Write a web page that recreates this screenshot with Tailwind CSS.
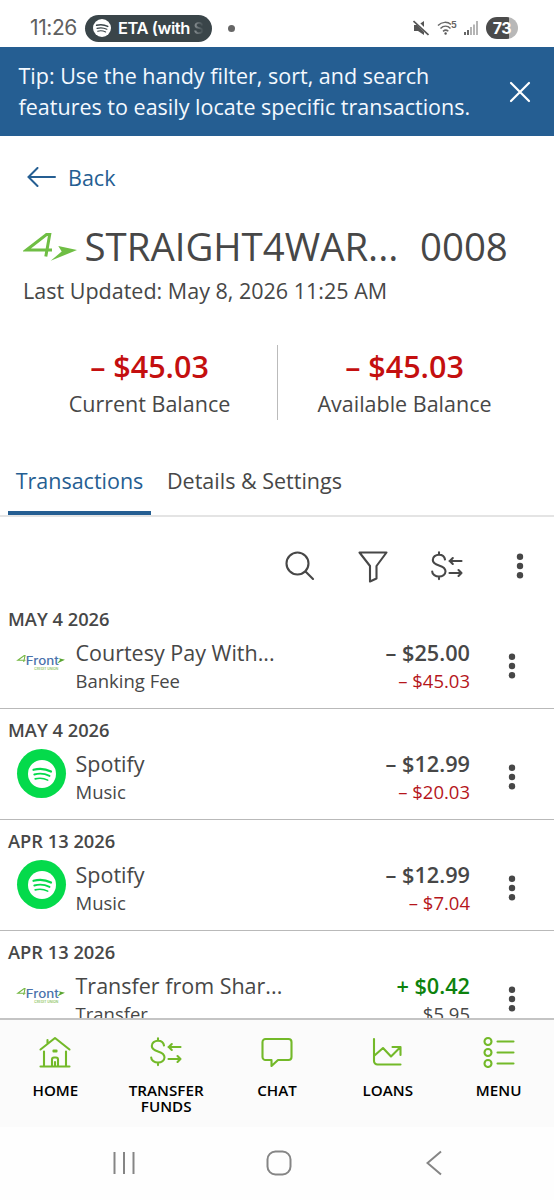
<!DOCTYPE html>
<html lang="en">
<head>
<meta charset="utf-8">
<title>Account transactions</title>
<script src="https://cdn.jsdelivr.net/npm/@tailwindcss/browser@4"></script>
</head>
<body class="w-[554px] h-[1200px] overflow-hidden bg-white text-[#474747] font-['Open_Sans',sans-serif]">
<svg class="hidden">
  <defs>
    <symbol id="transfer" viewBox="0 0 32 30">
      <g fill="none" stroke="currentColor" stroke-width="2.100" stroke-linecap="round" stroke-linejoin="round">
        <path d="M14 8.500C13.500 5.200 11.300 3.800 8 3.800S1.800 5.700 1.800 8.900c0 3.400 2.800 4.500 6.200 5.500s6.500 2.200 6.500 5.900c0 3.400-3 5.200-6.500 5.200S1.200 23.500 1.200 20.500M8 1.200v2.600M8 25.500v2.600"/>
        <path d="M18.500 10H30.500M21.800 7l-3 3 3 3M18.500 22H30.500M27.500 19l3 3-3 3"/>
      </g>
    </symbol>
    <symbol id="dots" viewBox="0 0 8 26">
      <g fill="currentColor"><circle cx="4" cy="3.700" r="3.200"/><circle cx="4" cy="13" r="3.200"/><circle cx="4" cy="22.300" r="3.200"/></g>
    </symbol>
    <symbol id="waves" viewBox="0 0 28 28">
      <g fill="none" stroke="currentColor" stroke-linecap="round"><path stroke-width="2.200" d="M5.500 9.800c6-1.600 12.200-1 17.500 1.700"/><path stroke-width="1.900" d="M6.300 14.500c5-1.400 10.500-.9 15.200 1.400"/><path stroke-width="1.600" d="M7.200 18.900c4.300-1.100 8.600-.7 12.500 1.200"/></g>
    </symbol>
    <symbol id="four" viewBox="0 0 54 30">
      <path fill="none" stroke="#6fbe44" stroke-width="3" d="M29 18H3.500L23.500 2.500h3.200L22.800 24.500"/>
      <path fill="#6fbe44" d="M35.300 14L54 18 27.700 28.800l11-9.300z"/>
    </symbol>
    <symbol id="front" viewBox="0 0 50 18">
      <path fill="none" stroke="#76b843" stroke-width="1.100" d="M9.500 7.300H1.800L8.200 2.600h.8L7.700 9"/>
      <text x="9.800" y="12.300" font-family="Inter" font-size="11.500" font-weight="500" fill="#4a72ac" textLength="33" lengthAdjust="spacingAndGlyphs">Front</text>
      <path fill="#5aa532" d="M43 5.200l6 1.600-8 3.700 3-3.400z"/>
      <text x="18.300" y="16.800" font-family="Inter" font-size="3" font-weight="600" fill="#8cc562" textLength="24" lengthAdjust="spacingAndGlyphs">CREDIT UNION</text>
    </symbol>
  </defs>
</svg>

<div class="h-[47px] flex items-center pt-[9px] pl-[30px] pr-9 text-[#606060]">
  <span class="w-[48px] text-[21px] tracking-[-0.4px] whitespace-nowrap font-['Inter',sans-serif]">11:26</span>
  <div class="ml-[7px] w-[127px] h-[27px] rounded-full bg-[#3a4549] flex items-center pl-2 overflow-hidden">
    <div class="size-[18px] rounded-full bg-white text-[#3a4549] shrink-0"><svg class="size-[18px]"><use href="#waves"/></svg></div>
    <span class="ml-[7px] text-white font-semibold text-[16.500px] whitespace-nowrap font-['Inter',sans-serif] tracking-[-0.45px]">ETA (with <span class="bg-linear-to-r from-[#8d9497] to-[#3a4549] bg-clip-text text-transparent">S</span></span>
  </div>
  <div class="ml-4 size-[7px] rounded-full bg-[#666]"></div>
  <svg class="ml-auto w-4 h-4" viewBox="0 0 16 16"><path fill="#555" d="M1 5h4l6-4v14l-6-4H1z"/><path stroke="#fff" stroke-width="3.500" d="M1.500 0l15 15"/><path stroke="#555" stroke-width="1.700" d="M.5 1l15 14"/></svg>
  <svg class="ml-2 w-5 h-4" viewBox="0 0 20 16"><g fill="none" stroke="#666" stroke-width="1.500"><path d="M1 5.500c4-4 9.500-4 13-1M3.500 8.500c3-3 7-3 10 0M6 11.300c1.800-1.500 3.800-1.500 5.300 0"/></g><circle cx="8.600" cy="13.500" r="1.200" fill="#555"/><text x="14" y="7.500" font-size="9" font-weight="700" fill="#666" font-family="Inter">5</text></svg>
  <svg class="ml-1.5 w-4 h-4" viewBox="0 0 16 16"><path fill="#666" d="M1 12h2v3H1zM4 10h2v5H4z"/><path fill="#b5b5b5" d="M7 7h2v8H7zM10 4.500h2V15h-2zM13 1h2v14h-2z"/></svg>
  <div class="ml-[7px] w-8 h-[22px] rounded-full bg-linear-to-r from-[#4b4b4b] from-73% to-[#b8b8b8] to-73% text-white font-bold text-[16px] leading-[22px] text-center font-['Inter',sans-serif] tracking-[-0.5px]">73</div>
</div>

<div class="h-[89px] bg-[#255e92] text-[#f4f9ff] flex items-start pl-[18.500px] pt-[12.500px]">
  <p class="w-[479.500px] text-[21.520px] leading-[31px] whitespace-nowrap">Tip: Use the handy filter, sort, and search<br>features to easily locate specific transactions.</p>
  <svg class="ml-[10px] mt-5 w-[24px] h-[24px]" viewBox="0 0 24 24"><path d="M3 3l18 18M21 3L3 21" stroke="#fff" stroke-width="2.200" stroke-linecap="round"/></svg>
</div>

<div class="h-[209px] pt-[25.500px] pl-[23px]">
  <div class="flex items-center h-[30px] text-[#255e92] text-[21.500px] leading-[30px]">
    <svg class="ml-[4px] w-[29px] h-[20px]" viewBox="0 0 29 20"><path d="M28 10H1.500M10.500 1l-9 9 9 9" fill="none" stroke="currentColor" stroke-width="2" stroke-linecap="round"/></svg>
    <span class="ml-3 pt-0.5">Back</span>
  </div>
  <div class="mt-[29.500px] flex h-[50px] text-[38.400px] leading-[50px] whitespace-nowrap">
    <svg class="w-[54px] h-[30px] mt-[11px] shrink-0"><use href="#four"/></svg>
    <span class="ml-[7.500px] w-[335.500px]">STRAIGHT4WAR...</span>
    <span>0008</span>
  </div>
  <p class="mt-[4.500px] text-[21.520px] leading-[30px]">Last Updated: May 8, 2026 11:25 AM</p>
</div>

<div class="h-[75px] flex text-center">
  <div class="w-[277px] pl-[22px] pt-px">
    <div class="text-[30.500px] leading-10 font-semibold text-[#c40f0f]">– $45.03</div>
    <div class="mt-[3px] text-[21.500px] leading-[30px]">Current Balance</div>
  </div>
  <div class="flex-1 border-l border-[#bbb] pr-[23px] pt-px">
    <div class="text-[30.500px] leading-10 font-semibold text-[#c40f0f]">– $45.03</div>
    <div class="mt-[3px] text-[21.500px] leading-[30px]">Available Balance</div>
  </div>
</div>

<div class="mt-[45px] h-[52px] flex border-b-2 border-[#e4e4e4] pl-2 text-[21.500px] leading-[30px]">
  <div class="w-[143px] h-[50px] pt-px text-center text-[#255e92] border-b-4 border-[#255e92]">Transactions</div>
  <div class="ml-4 pt-px">Details &amp; Settings</div>
</div>

<div class="h-[81px] flex items-start pt-[34px] pl-[285px]">
  <svg class="w-[30px] h-[30px]" viewBox="0 0 30 30"><g fill="none" stroke="#474747" stroke-width="2.100" stroke-linecap="round"><circle cx="12.500" cy="12.500" r="11"/><path d="M20.500 20.500l7.500 7.500"/></g></svg>
  <svg class="ml-[43px] w-[30px] h-[32px]" viewBox="0 0 30 32"><path d="M1.500 1.500h27L18.500 15v12.500l-6.500 3V15z" fill="none" stroke="#474747" stroke-width="2.100" stroke-linejoin="round"/></svg>
  <svg class="ml-[43px] w-8 h-[30px]"><use href="#transfer"/></svg>
  <svg class="ml-[53px] mt-[2px] w-2 h-[26px]"><use href="#dots"/></svg>
</div>

<div class="h-[420px] overflow-hidden">
  <div class="h-[111px] border-b border-[#b9b9b9] pt-[9px]">
    <div class="pl-2 text-[18.300px] leading-6 font-semibold">MAY 4 2026</div>
    <div class="flex mt-[6px] whitespace-nowrap">
      <svg class="ml-4 mt-[16px] w-[50px] h-[18px]"><use href="#front"/></svg>
      <div class="ml-[9.500px] pt-px"><div class="text-[21.500px] leading-[30px]">Courtesy Pay With...</div><div class="-mt-px text-[18.500px] leading-7">Banking Fee</div></div>
      <div class="ml-auto pt-px text-right"><div class="text-[21.700px] leading-[30px] font-semibold">– $25.00</div><div class="-mt-px text-[18.500px] leading-7 text-[#b5161b]">– $45.03</div></div>
      <svg class="ml-[38px] mr-[38px] mt-4 w-2 h-[26px]"><use href="#dots"/></svg>
    </div>
  </div>
  <div class="h-[111px] border-b border-[#b9b9b9] pt-[9px]">
    <div class="pl-2 text-[18.300px] leading-6 font-semibold">MAY 4 2026</div>
    <div class="flex mt-[6px] whitespace-nowrap">
      <div class="ml-[17px] mt-px size-[49px] rounded-full bg-[#04da4b] flex items-center justify-center"><div class="size-7 rounded-full bg-white text-[#04da4b]"><svg class="size-7"><use href="#waves"/></svg></div></div>
      <div class="ml-[9.500px] pt-px"><div class="text-[21.500px] leading-[30px]">Spotify</div><div class="-mt-px text-[18.500px] leading-7">Music</div></div>
      <div class="ml-auto pt-px text-right"><div class="text-[21.700px] leading-[30px] font-semibold">– $12.99</div><div class="-mt-px text-[18.500px] leading-7 text-[#b5161b]">– $20.03</div></div>
      <svg class="ml-[38px] mr-[38px] mt-4 w-2 h-[26px]"><use href="#dots"/></svg>
    </div>
  </div>
  <div class="h-[111px] border-b border-[#b9b9b9] pt-[9px]">
    <div class="pl-2 text-[18.300px] leading-6 font-semibold">APR 13 2026</div>
    <div class="flex mt-[6px] whitespace-nowrap">
      <div class="ml-[17px] mt-px size-[49px] rounded-full bg-[#04da4b] flex items-center justify-center"><div class="size-7 rounded-full bg-white text-[#04da4b]"><svg class="size-7"><use href="#waves"/></svg></div></div>
      <div class="ml-[9.500px] pt-px"><div class="text-[21.500px] leading-[30px]">Spotify</div><div class="-mt-px text-[18.500px] leading-7">Music</div></div>
      <div class="ml-auto pt-px text-right"><div class="text-[21.700px] leading-[30px] font-semibold">– $12.99</div><div class="-mt-px text-[18.500px] leading-7 text-[#b5161b]">– $7.04</div></div>
      <svg class="ml-[38px] mr-[38px] mt-4 w-2 h-[26px]"><use href="#dots"/></svg>
    </div>
  </div>
  <div class="h-[111px] pt-[9px]">
    <div class="pl-2 text-[18.300px] leading-6 font-semibold">APR 13 2026</div>
    <div class="flex mt-[6px] whitespace-nowrap">
      <svg class="ml-4 mt-[16px] w-[50px] h-[18px]"><use href="#front"/></svg>
      <div class="ml-[9.500px] pt-px"><div class="text-[21.500px] leading-[30px]">Transfer from Shar...</div><div class="-mt-px text-[18.500px] leading-7">Transfer</div></div>
      <div class="ml-auto pt-px text-right"><div class="text-[21.700px] leading-[30px] font-semibold text-[#0d820d]">+ $0.42</div><div class="-mt-px text-[18.500px] leading-7">$5.95</div></div>
      <svg class="ml-[38px] mr-[38px] mt-4 w-2 h-[26px]"><use href="#dots"/></svg>
    </div>
  </div>
</div>

<div class="h-[109px] bg-[#fbfbfb] border-t-2 border-[#c4c4c4] grid grid-cols-5 text-center text-black text-[15.200px] leading-[15.500px] font-semibold">
  <div class="flex flex-col items-center pt-4"><svg class="w-8 h-8 text-[#73b929]" viewBox="0 0 32 32"><g fill="none" stroke="currentColor" stroke-width="2.100" stroke-linecap="round" stroke-linejoin="round"><path d="M1.500 13.500L16 2l14.500 11.500M8.500 7.500V4M5 15.500V30M27 15.500V30M1.500 30.500h29M13 30v-6.500a2 2 0 0 1 2-2h2a2 2 0 0 1 2 2V30M16 26v4M14.500 14.500h3v1h-3z"/></g></svg><span class="mt-[15px]">HOME</span></div>
  <div class="flex flex-col items-center pt-4"><svg class="w-8 h-8 text-[#73b929]"><use href="#transfer"/></svg><span class="mt-[15px]">TRANSFER<br>FUNDS</span></div>
  <div class="flex flex-col items-center pt-4"><svg class="w-8 h-8 text-[#73b929]" viewBox="0 0 32 32"><path d="M4.500 3h23a3 3 0 0 1 3 3v15a3 3 0 0 1-3 3H17l-6.500 6v-6h-6a3 3 0 0 1-3-3V6a3 3 0 0 1 3-3z" fill="none" stroke="currentColor" stroke-width="2.100" stroke-linejoin="round"/></svg><span class="mt-[15px]">CHAT</span></div>
  <div class="flex flex-col items-center pt-4"><svg class="w-8 h-8 text-[#73b929]" viewBox="0 0 32 32"><path d="M2 3v22a3.500 3.500 0 0 0 3.500 3.500H28.500M2.500 19.500L11 12l8 8.500L28.500 11M20.500 11h8v8" fill="none" stroke="currentColor" stroke-width="2.100" stroke-linecap="round" stroke-linejoin="round"/></svg><span class="mt-[15px]">LOANS</span></div>
  <div class="flex flex-col items-center pt-4"><svg class="w-8 h-8 text-[#73b929]" viewBox="0 0 32 32"><g fill="none" stroke="currentColor" stroke-width="2.100" stroke-linecap="round"><circle cx="5" cy="5.500" r="3.500"/><circle cx="5" cy="16.500" r="3.500"/><circle cx="5" cy="27.500" r="3.500"/><path d="M14.500 5.500h16M14.500 16.500h16M14.500 27.500h16"/></g></svg><span class="mt-[15px]">MENU</span></div>
</div>

<div class="h-[73px] flex items-center bg-[#fefefe] pl-[112px] pb-[2px]">
  <svg class="w-6 h-6" viewBox="0 0 24 24"><path d="M2.500 1v22M12 1v22M21.500 1v22" stroke="#858585" stroke-width="2"/></svg>
  <svg class="ml-[130px] w-[26px] h-[26px]" viewBox="0 0 26 26"><rect x="1.500" y="1.500" width="23" height="23" rx="8" fill="none" stroke="#858585" stroke-width="2"/></svg>
  <svg class="ml-[134px] w-4 h-[26px]" viewBox="0 0 16 26"><path d="M15 1.500L1.500 13 15 24.500" fill="none" stroke="#858585" stroke-width="2"/></svg>
</div>
</body>
</html>
